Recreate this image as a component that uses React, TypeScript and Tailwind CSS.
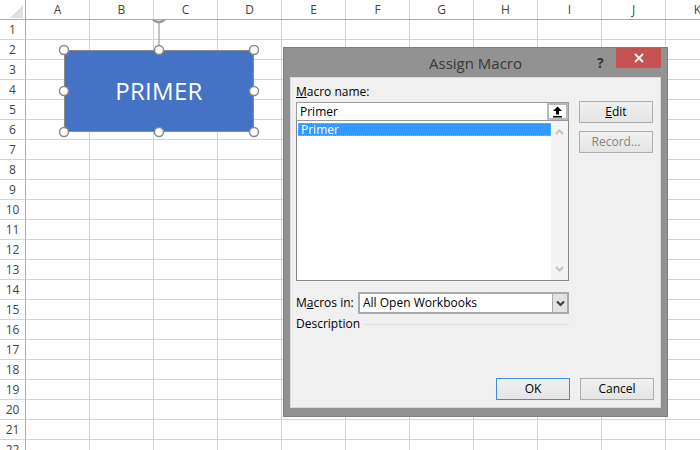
import React from 'react'

const cols = ['A', 'B', 'C', 'D', 'E', 'F', 'G', 'H', 'I', 'J', 'K']
const rows = Array.from({ length: 22 }, (_, i) => i + 1)

const font = { fontFamily: '"Open Sans", "Noto Sans", sans-serif' }

function Sheet() {
  return (
    <div className="flex flex-col">
      <div className="flex h-[20px] border-b border-[#ababab] bg-white">
        <div className="relative w-[26px] h-full shrink-0 border-r border-[#ababab]">
          <svg width="26" height="19" className="block">
            <polygon points="23,5 23,18 10,18" fill="#dfdfdf" />
          </svg>
        </div>
        {cols.map((c) => (
          <div
            key={c}
            className="w-[64px] h-full shrink-0 border-r border-[#d4d4d4] flex items-center justify-center text-[12px] text-[#444]"
          >
            {c}
          </div>
        ))}
      </div>
      {rows.map((r) => (
        <div key={r} className="flex h-[20px] shrink-0">
          <div className="w-[26px] h-full shrink-0 border-r border-b border-r-[#ababab] border-b-[#d4d4d4] flex items-center justify-center text-[12px] text-[#444]">
            {r}
          </div>
          {cols.map((c) => (
            <div key={c} className="w-[64px] h-full shrink-0 border-r border-b border-[#d4d4d4]" />
          ))}
        </div>
      ))}
    </div>
  )
}

function Shape() {
  const handles = [
    [14, 30], [109, 30], [204, 30],
    [14, 71], [204, 71],
    [14, 112], [109, 112], [204, 112],
  ]
  return (
    <>
      <div className="absolute left-[64px] top-[50px] w-[190px] h-[82px] bg-[#4472c4] border border-[#8a8a8a] flex items-center justify-center text-white text-[24px] tracking-[0.3px]">
        PRIMER
      </div>
      <svg className="absolute left-[50px] top-[20px]" width="220" height="125">
        <circle cx="109" cy="-6" r="8" fill="none" stroke="#9a9a9a" strokeWidth="2.5" />
        <line x1="109" y1="3" x2="109" y2="26" stroke="#8a8a8a" strokeWidth="1" />
        {handles.map(([x, y], i) => (
          <circle key={i} cx={x} cy={y} r="4.5" fill="white" stroke="#8a8a8a" strokeWidth="1.5" />
        ))}
      </svg>
    </>
  )
}

function Btn({ children, disabled, focused }: { children: React.ReactNode; disabled?: boolean; focused?: boolean }) {
  return (
    <div
      className={`w-[74px] h-[22px] flex items-center justify-center text-[12px] bg-gradient-to-b from-[#f0f0f0] to-[#e5e5e5] border ${
        focused ? 'border-[#3c8fe0]' : 'border-[#adadad]'
      } ${disabled ? 'text-[#838383]' : 'text-black'}`}
    >
      {children}
    </div>
  )
}

function Dialog() {
  return (
    <div className="absolute left-[283px] top-[47px] w-[385px] h-[370px] bg-[#929292] border border-[#7f7f7f] flex flex-col">
      <div className="relative h-[29px] shrink-0 flex items-center justify-center">
        <span className="text-[15px] text-[#383838] mt-[1px]">Assign Macro</span>
        <span className="absolute left-[313px] top-[4px] text-[14px] font-bold text-[#333]">?</span>
        <div className="absolute left-[332px] top-0 w-[45px] h-[20px] bg-[#c75050] flex items-center justify-center">
          <svg width="10" height="10" viewBox="0 0 10 10">
            <path d="M1 1 L9 9 M9 1 L1 9" stroke="white" strokeWidth="1.8" />
          </svg>
        </div>
      </div>
      <div className="mx-[6px] mb-[8px] flex-1 bg-[#f0f0f0] border border-[#dadada] flex flex-col pl-[5px] pr-[6px] text-[12px] text-black">
        <div className="flex gap-[10px]">
          <div className="w-[273px] flex flex-col">
            <div className="mt-[6px] h-[16px] leading-[16px]">
              <span className="underline">M</span>acro name:
            </div>
            <div className="mt-[2px] h-[19px] bg-white border border-[#9a9a9a] flex items-center">
              <span className="flex-1 pl-[3px] leading-[16px]">Primer</span>
              <div className="w-[21px] h-full bg-[#b9b9b9] p-[2px] pb-[2px] flex">
                <div className="flex-1 bg-white flex items-center justify-center">
                  <svg width="11" height="12" viewBox="0 0 11 12">
                    <path d="M5.5 0.5 L10 5 H7 V8.5 H4 V5 H1 Z" fill="black" />
                    <rect x="1" y="10" width="9" height="1.5" fill="black" />
                  </svg>
                </div>
              </div>
            </div>
            <div className="h-[160px] bg-white border border-t-0 border-[#828790] flex">
              <div className="flex-1 pt-[2px] pl-[1px]">
                <div className="h-[13px] bg-[#3399ff] text-white border border-dotted border-[#f0a030] leading-[11px] pl-[2px]">
                  Primer
                </div>
              </div>
              <div className="w-[17px] bg-[#f4f4f4] flex flex-col items-center justify-between py-[8px]">
                <svg width="9" height="6" viewBox="0 0 9 6">
                  <path d="M1 5 L4.5 1.5 L8 5" fill="none" stroke="#c2c2c2" strokeWidth="2" />
                </svg>
                <svg width="9" height="6" viewBox="0 0 9 6">
                  <path d="M1 1 L4.5 4.5 L8 1" fill="none" stroke="#c2c2c2" strokeWidth="2" />
                </svg>
              </div>
            </div>
            <div className="mt-[11px] flex items-center h-[22px]">
              <div className="w-[62px]">
                M<span className="underline">a</span>cros in:
              </div>
              <div className="flex-1 h-full bg-white border border-[#aaaaaa] border-2 flex">
                <span className="flex-1 pl-[3px] leading-[18px]">All Open Workbooks</span>
                <div className="w-[15px] bg-[#e3e3e3] border-l border-[#aaaaaa] flex items-center justify-center">
                  <svg width="9" height="7" viewBox="0 0 9 7">
                    <path d="M1 1.5 L4.5 5 L8 1.5" fill="none" stroke="#404040" strokeWidth="2.2" />
                  </svg>
                </div>
              </div>
            </div>
            <div className="mt-[2px] flex items-center h-[16px]">
              <span>Description</span>
              <div className="flex-1 ml-[5px] h-px bg-[#dcdcdc]" />
            </div>
          </div>
          <div className="flex flex-col gap-[8px] pt-[23px]">
            <Btn>
              <span className="underline">E</span>dit
            </Btn>
            <Btn disabled>Record...</Btn>
          </div>
        </div>
        <div className="mt-auto mb-[7px] flex justify-end gap-[10px]">
          <Btn focused>OK</Btn>
          <Btn>Cancel</Btn>
        </div>
      </div>
    </div>
  )
}

export default function App() {
  return (
    <div className="relative w-[700px] h-[450px] overflow-hidden bg-white" style={font}>
      <Sheet />
      <Shape />
      <Dialog />
    </div>
  )
}
